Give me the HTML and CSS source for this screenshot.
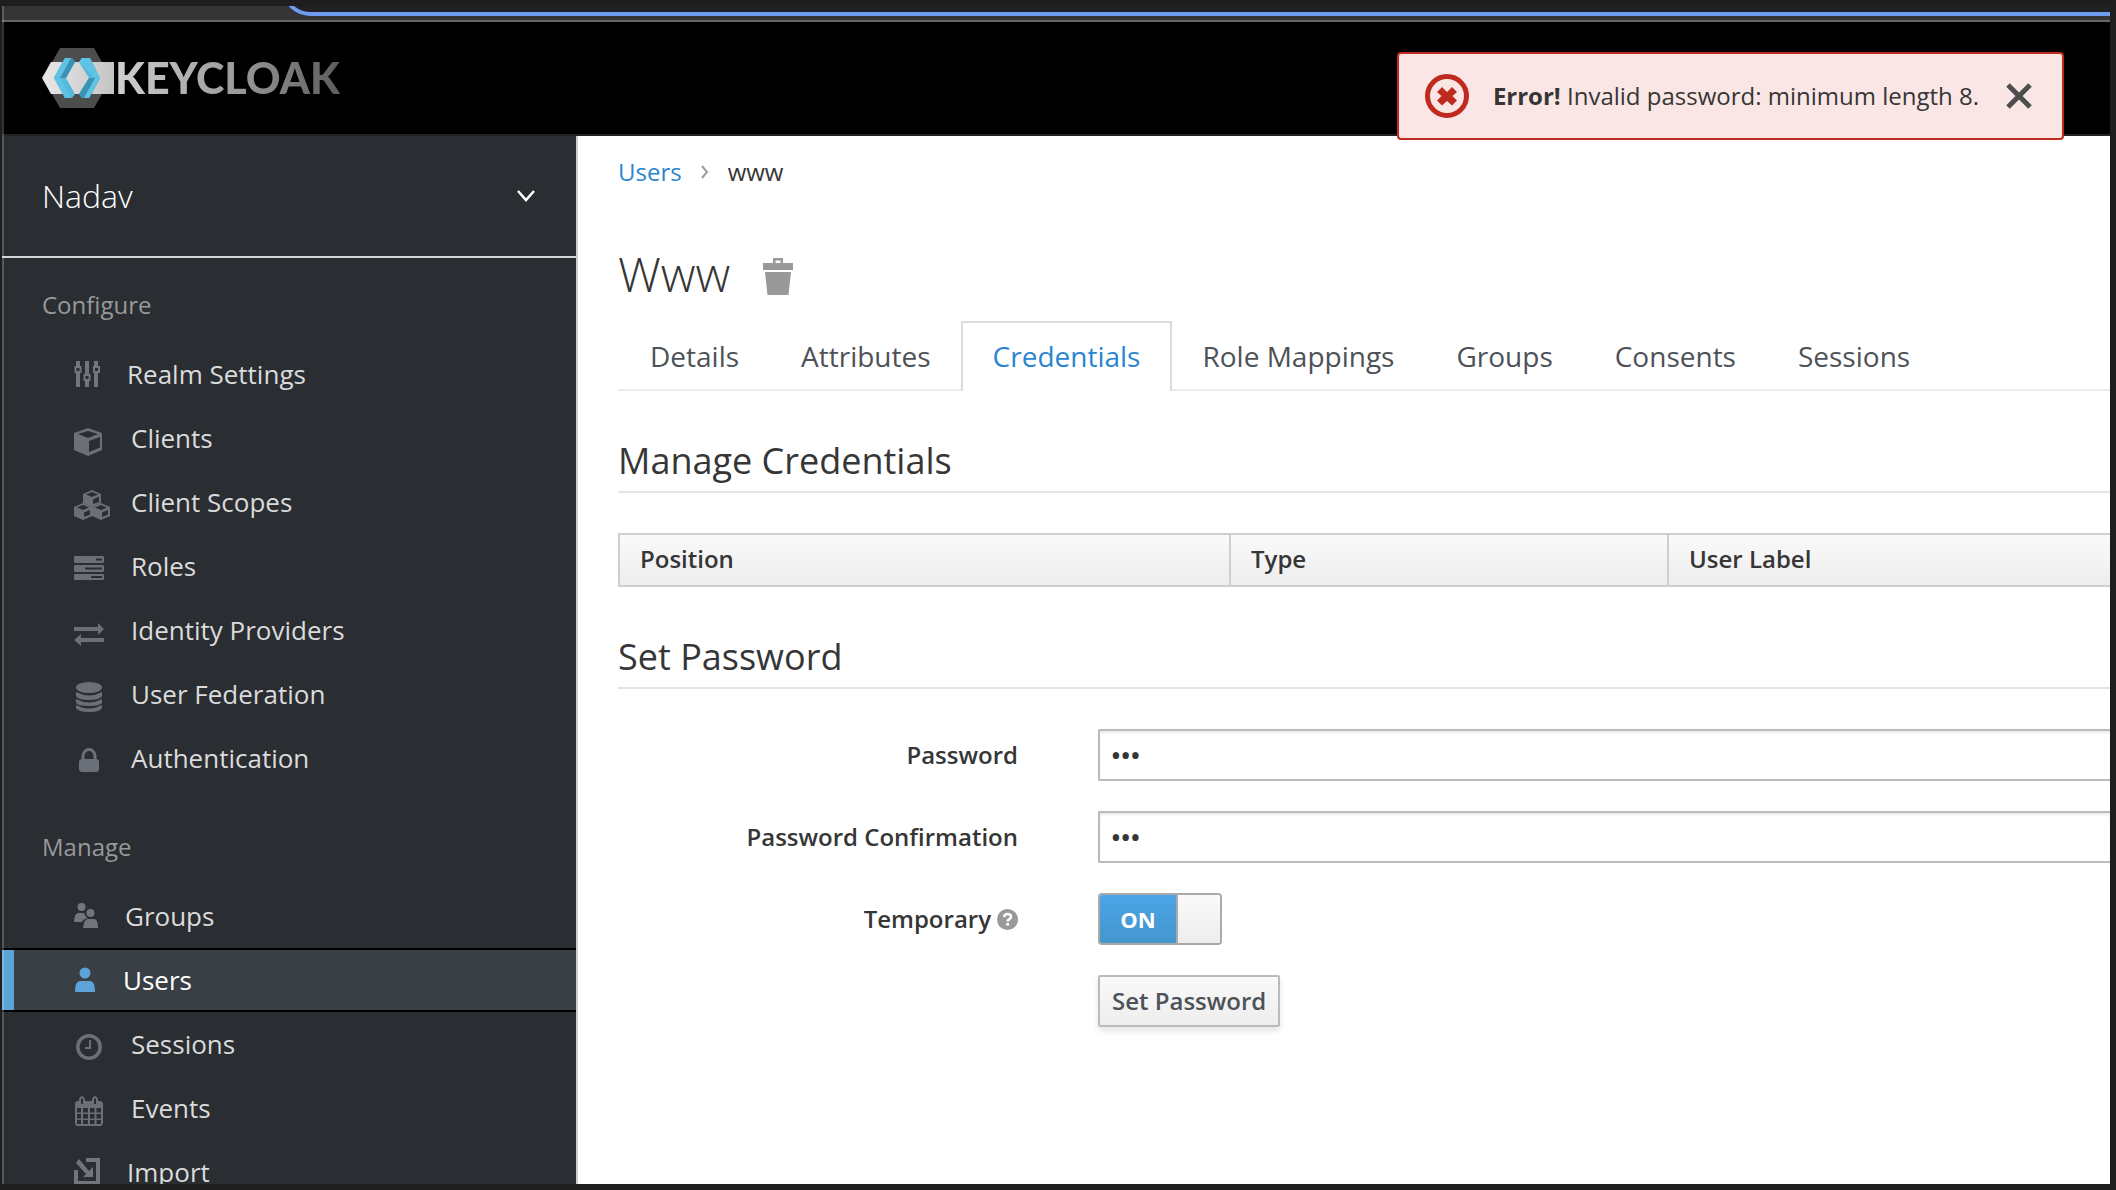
FILE: index.html
```html
<!DOCTYPE html>
<html lang="en">
<head>
<meta charset="utf-8">
<title>Keycloak Admin Console</title>
<link rel="stylesheet" href="styles.css">
</head>
<body>
<div class="window">
  <div class="toolbar"><div class="address"></div></div>
  <header class="masthead">
    <a class="brand" href="#">
      <svg class="brand-mark" width="73" height="60" viewBox="0 0 73 60" aria-hidden="true">
        <defs><linearGradient id="plate"><stop offset="0" stop-color="#e8e8e8"/><stop offset="1" stop-color="#c4c4c4"/></linearGradient></defs>
        <path d="M18 0H52L69 30L52 60H18L1 30Z" fill="#4d4d4d"/>
        <path d="M9 14H72V46H9L0 30Z" fill="url(#plate)"/>
        <path d="M23 10H30L33 14L24 30L33 46L30 50H23L12 30Z" fill="#53b9dd"/>
        <path d="M30 10L33 14L24 30H12L23 10Z" fill="#3a93b5"/>
        <path d="M23 10H29L18 30L29 50H23L12 30Z" fill="#5fc3e6"/>
        <path d="M40 10H48L58 30L47 50H40L37 46L47 30L37 14Z" fill="#53b9dd"/>
        <path d="M58 30L47 50H40L37 46L47 30Z" fill="#3a93b5"/>
        <path d="M40 10H48L58 30L47 50H42L53 30L37 14Z" fill="#5fc3e6"/>
      </svg>
      <span class="brand-name">KEYCLOAK</span>
    </a>
  </header>
  <div class="body">
    <nav class="sidebar">
      <button class="realm" type="button">Nadav
        <svg width="20" height="14" viewBox="0 0 20 14" fill="none" stroke="#fff" stroke-width="2.500" aria-hidden="true"><path d="M2 2L10 11L18 2"/></svg>
      </button>
      <section class="group">
        <h2>Configure</h2>
        <ul>
          <li><a href="#"><svg class="gray" width="28" height="40" viewBox="0 -20 28 40"><path d="M2-13h4v6H2zM2-1h4v14H2zM11-13h4V1h-4zM11 7h4v6h-4zM20-13h4v6h-4zM20-1h4v14h-4z"/><path d="M1.500-7h5v5h-5zM10.500 1h5v5h-5zM20-7h5v5h-5z" fill="none" stroke="#72767b" stroke-width="2"/></svg>Realm Settings</a></li>
          <li><a href="#"><svg width="32" height="40" viewBox="0 -20 32 40"><path fill-rule="evenodd" d="M14-10L28-5V12L14 18L0 12V-5ZM14-7L4-4L14 0L24-4ZM15 3V14L26 9.500V-1Z"/></svg>Clients</a></li>
          <li><a href="#"><svg width="32" height="40" viewBox="0 -20 32 40"><path fill-rule="evenodd" d="M18-12L27-8V1L18 5L9 1V-8ZM18-10L12-7.500L18-5L24-7.500ZM19-2.500V2L25 0V-5.500Z"/><path fill-rule="evenodd" d="M9 1L18 5V14L9 18L0 14V5ZM9 3L3 5.500L9 8L15 5.500ZM10 10.500V15L16 12.500V8Z"/><path fill-rule="evenodd" d="M27 1L36 5V14L27 18L18 14V5ZM27 3L21 5.500L27 8L33 5.500ZM28 10.500V15L34 12.500V8Z"/></svg>Client Scopes</a></li>
          <li><a href="#"><svg width="32" height="40" viewBox="0 -20 32 40"><path fill-rule="evenodd" d="M1-10H29l1 1v5l-1 1H1l-1-1v-5zM22-7.500v2h6v-2zM1-1H29l1 1v5l-1 1H1L0 5V0zM11 1.500v2h17v-2zM1 8H29l1 1v4l-1 1H1l-1-1V9zM17 10v2h11v-2z"/></svg>Roles</a></li>
          <li><a href="#"><svg width="32" height="40" viewBox="0 -20 32 40"><path d="M0-3H24V-7L30-1L24 5V1H0ZM30 8H7V4L0 10L7 16V12H30Z"/></svg>Identity Providers</a></li>
          <li><a href="#"><svg width="32" height="40" viewBox="0 -20 32 40"><ellipse cx="15" cy="-6.500" rx="13" ry="5.500"/><path d="M2-2Q15 5 28-2V2Q26 6 15 6T2 2ZM2 5Q15 12 28 5V9Q26 12 15 12T2 9ZM2 11Q15 18 28 11V14Q26 18 15 18T2 14Z"/></svg>User Federation</a></li>
          <li><a href="#"><svg width="32" height="40" viewBox="0 -20 32 40"><path d="M7 1H23L25 3V12L23 14H7L5 12V3Z"/><path d="M9 2V-2a6 6.500 0 0 1 12 0V2" fill="none" stroke="#6b6f78" stroke-width="3"/></svg>Authentication</a></li>
        </ul>
      </section>
      <section class="group">
        <h2>Manage</h2>
        <ul>
          <li><a href="#"><svg class="gray" width="26" height="40" viewBox="0 -20 26 40"><circle cx="7.500" cy="-9" r="4"/><circle cx="16.500" cy="-3" r="4"/><path d="M0 6Q0-3 5-3H10Q12 2 14 2Q9 3 8 6ZM9 12Q10 3 14 3H20Q24 3 24 12Z"/></svg>Groups</a></li>
          <li class="active"><a href="#" aria-current="page"><svg width="24" height="40" viewBox="0 -20 24 40"><circle cx="11" cy="-7" r="5.500"/><path d="M1 12Q1 1 6 1H16Q21 1 21 12Z"/></svg>Users</a></li>
          <li><a href="#"><svg width="32" height="40" viewBox="0 -20 32 40" ><g fill="none" stroke="#6b6f78"><circle cx="15" cy="3" r="11.200" stroke-width="3.500"/><path d="M16-4V4H11" stroke-width="2"/></g></svg>Sessions</a></li>
          <li><a href="#"><svg width="32" height="40" viewBox="0 -20 32 40"><path fill-rule="evenodd" d="M3-7H5V-9Q8-15 11-9V-7H18V-9Q21-15 24-9V-7H27L29-5V16L27 18H3L1 16V-5ZM3 0V4.500H7V0ZM9 0V4.500H14V0ZM16 0V4.500H20.500V0ZM22.500 0V4.500H27V0ZM3 6V10.500H7V6ZM9 6V10.500H14V6ZM16 6V10.500H20.500V6ZM22.500 6V10.500H27V6ZM3 12V16H7V12ZM9 12V16H14V12ZM16 12V16H20.500V12ZM22.500 12V16H27V12ZM7-9.500V-4H9V-9.500ZM20-9.500V-4H22V-9.500Z"/></svg>Events</a></li>
          <li><a href="#"><svg class="gray" width="28" height="40" viewBox="0 -20 28 40"><path d="M0-2H4V9H22V-10H12V-14H26V13H0ZM5-13L15-1L19-5V5H9L12 2L2-9Z"/></svg>Import</a></li>
        </ul>
      </section>
    </nav>
    <main class="content">
      <nav class="crumbs" aria-label="Breadcrumb">
        <a href="#">Users</a>
        <svg width="8" height="14" viewBox="0 0 8 14" fill="none" stroke="#9c9c9c" stroke-width="2" aria-hidden="true"><path d="M1 1L6 7L1 13"/></svg>
        <span>www</span>
      </nav>
      <div class="title">
        <h1>Www</h1>
        <button type="button" aria-label="Delete user">
          <svg width="32" height="38" viewBox="0 0 32 38" fill="#999"><path fill-rule="evenodd" d="M11 5V0H21V5H31V12H1V5ZM13.500 2.500V5H18.500V2.500Z"/><path d="M3 14H29L26.500 37H5.500Z"/></svg>
        </button>
      </div>
      <ul class="tabs">
        <li><a href="#">Details</a></li>
        <li><a href="#">Attributes</a></li>
        <li class="active"><a href="#" aria-current="page">Credentials</a></li>
        <li><a href="#">Role Mappings</a></li>
        <li><a href="#">Groups</a></li>
        <li><a href="#">Consents</a></li>
        <li><a href="#">Sessions</a></li>
      </ul>
      <h2>Manage Credentials</h2>
      <table>
        <thead><tr><th class="position" scope="col">Position</th><th class="type" scope="col">Type</th><th scope="col">User Label</th></tr></thead>
      </table>
      <h2>Set Password</h2>
      <form>
        <label for="password">Password</label>
        <input class="field" id="password" type="password" value="www">
        <label for="confirm">Password Confirmation</label>
        <input class="field" id="confirm" type="password" value="www">
        <label for="temporary">Temporary
          <svg width="21" height="21" viewBox="0 0 21 21" aria-hidden="true"><circle cx="10.500" cy="10.500" r="10.500" fill="#999"/><path d="M7 8Q7.500 5 10.500 5Q14 5 14 7.800Q14 9.300 12 10.300Q10.600 11 10.600 12.500" fill="none" stroke="#fff" stroke-width="2.600"/><path d="M9.200 14h2.800v2.600H9.200z" fill="#fff"/></svg>
        </label>
        <label class="switch"><input id="temporary" type="checkbox" checked><span class="on">ON</span><span class="knob"></span></label>
        <button class="submit" type="button">Set Password</button>
      </form>
    </main>
  </div>
  <div class="alert" role="alert">
    <svg width="44" height="44" viewBox="0 0 44 44" aria-hidden="true"><circle cx="22" cy="22" r="19.500" fill="none" stroke="#bf2a1f" stroke-width="5"/><path d="M17 13L22 18L27 13L32 18L27.500 22L32 26.500L27 31.500L22 27L17 31.500L12 26.500L16.500 22L12 18Z" fill="#bf2a1f"/></svg>
    <p><strong>Error!</strong> Invalid password: minimum length 8.</p>
    <button type="button" aria-label="Close"><svg width="26" height="26" viewBox="0 0 26 26" fill="none" stroke="#4d4d4d" stroke-width="5"><path d="M2 2L24 24M24 2L2 24"/></svg></button>
  </div>
</div>
</body>
</html>
```

FILE: styles.css
```css
* {
  box-sizing: border-box;
}

body {
  margin: 0;
  height: 100vh;
  padding: 6px 6px 6px 2px;
  background: #1e1e1e;
  color: #363636;
  font: 24px/32px "Open Sans", "Noto Sans", sans-serif;
}

h1, h2, p, ul {
  margin: 0;
  padding: 0;
  font-weight: 400;
}

ul {
  list-style: none;
}

a {
  color: inherit;
  text-decoration: none;
}

button {
  margin: 0;
  padding: 0;
  border: 0;
  background: none;
  color: inherit;
  font: inherit;
}

svg {
  display: block;
  flex: none;
  overflow: visible;
}

.window {
  position: relative;
  display: flex;
  flex-direction: column;
  height: 100%;
  overflow: hidden;
}

.window::before {
  content: "";
  position: absolute;
  inset: 0 auto 0 0;
  width: 2px;
  background: rgba(255, 255, 255, 0.2);
}

.toolbar {
  display: flex;
  align-items: flex-end;
  flex: none;
  height: 16px;
  overflow: hidden;
  border-bottom: 2px solid #666;
  background: #353535;
}

.address {
  flex: 1;
  height: 56px;
  margin: 0 0 4px 280px;
  border: 4px solid #6e9af0;
  border-right: 0;
  border-radius: 28px 0 0 28px;
  background: #202124;
}

.masthead {
  flex: none;
  display: flex;
  align-items: center;
  height: 114px;
  padding: 0 40px;
  border-bottom: 2px solid #222;
  background: #000;
}

.brand {
  display: flex;
  align-items: center;
}

.brand-name {
  background: linear-gradient(90deg, #d0d0d0, #999 55%, #5c5c5c);
  background-clip: text;
  color: transparent;
  font: 900 43px/60px Lato, "Open Sans", sans-serif;
}

.body {
  flex: 1;
  display: flex;
  min-height: 0;
}

.sidebar {
  flex: none;
  width: 576px;
  overflow: hidden;
  border-right: 2px solid #ccc;
  background: #2a2d32;
}

.realm {
  display: flex;
  align-items: center;
  justify-content: space-between;
  width: 100%;
  height: 122px;
  padding: 0 40px;
  border-bottom: 2px solid #d5d5d5;
  color: #fff;
  font-size: 32px;
  font-weight: 300;
}

.group {
  padding: 31px 0 10px;
}

.group h2 {
  margin-bottom: 21px;
  padding-left: 40px;
  color: #999;
  font-size: 24px;
}

.group a {
  display: flex;
  align-items: center;
  gap: 25px;
  height: 64px;
  padding-left: 72px;
  color: #dbdbdb;
  font-size: 26px;
}

.group svg {
  fill: #6b6f78;
}

.group .gray {
  fill: #72767b;
}

.group .active a {
  border: solid #000;
  border-width: 2px 0;
  background: #393f44;
  box-shadow: inset 12px 0 #5ba3d9;
  color: #fff;
}

.group .active svg {
  fill: #5ba3d9;
}

.content {
  flex: 1;
  min-width: 0;
  overflow: hidden;
  padding: 20px 0 0 40px;
  background: #fff;
}

.crumbs {
  display: flex;
  align-items: center;
  gap: 19px;
}

.crumbs a {
  color: #2a85d0;
}

.title {
  display: flex;
  align-items: center;
  gap: 32px;
  margin: 54px 0 15px;
}

.title button {
  padding-top: 6px;
}

h1 {
  font-size: 48px;
  font-weight: 300;
  line-height: 64px;
}

.tabs {
  display: flex;
  border-bottom: 2px solid #ececec;
  font-size: 28px;
}

.tabs li + li {
  margin-left: -2px;
}

.tabs a {
  display: block;
  margin-bottom: -2px;
  padding: 17px 30px 19px;
  border: 2px solid transparent;
  border-bottom: 0;
  color: #4d5258;
}

.tabs .active a {
  border-color: #dcdcdc;
  background: #fff;
  color: #2a85d0;
}

.content h2 {
  margin: 46px 0 40px;
  padding-bottom: 6px;
  border-bottom: 2px solid #e4e4e4;
  font-size: 36px;
  line-height: 48px;
}

table {
  width: 100%;
  border-spacing: 0;
  table-layout: fixed;
}

th {
  height: 54px;
  padding: 0 20px 2px;
  border: solid #cfcfcf;
  border-width: 2px 0 2px 2px;
  background: linear-gradient(#fafafa, #ededed);
  font-weight: 600;
  text-align: left;
}

.position {
  width: 611px;
}

.type {
  width: 438px;
}

form {
  display: grid;
  grid-template-columns: 400px 1fr;
  gap: 30px 80px;
  align-items: center;
  justify-items: start;
}

form > label:not(.switch) {
  display: flex;
  align-items: center;
  justify-self: end;
  gap: 6px;
  font-weight: 600;
}

.field {
  width: 100%;
  height: 52px;
  padding: 0 11px;
  border: 2px solid #bbb;
  border-right: 0;
  border-radius: 2px 0 0 2px;
  background: #fff;
  box-shadow: inset 0 2px 2px rgba(0, 0, 0, 0.08);
  color: #363636;
  font: inherit;
  font-size: 26px;
  font-weight: 600;
}

.switch {
  display: flex;
  width: 124px;
  height: 52px;
  overflow: hidden;
  border: 2px solid #aaa;
  border-radius: 4px;
}

.switch input {
  position: absolute;
  opacity: 0;
}

.on {
  flex: 1;
  background: linear-gradient(#4ba5e6, #4496cd);
  color: #fff;
  font-size: 22px;
  font-weight: 700;
  line-height: 48px;
  text-align: center;
}

.knob {
  width: 44px;
  border-left: 2px solid #aaa;
  background: linear-gradient(#fafafa, #ededed);
}

.submit {
  grid-column: 2;
  height: 52px;
  padding: 0 12px;
  border: 2px solid #bbb;
  border-radius: 2px;
  background: linear-gradient(#fafafa, #ededed);
  box-shadow: 0 4px 6px rgba(0, 0, 0, 0.1);
  color: #4d5258;
  font-weight: 600;
}

.alert {
  position: absolute;
  top: 46px;
  right: 46px;
  display: flex;
  align-items: center;
  height: 88px;
  padding: 0 30px 0 26px;
  border: 2px solid #bf2a1f;
  border-radius: 4px;
  background: #fae6e4;
}

.alert p {
  margin: 0 27px 0 24px;
}

.alert strong {
  font-weight: 700;
}
```
